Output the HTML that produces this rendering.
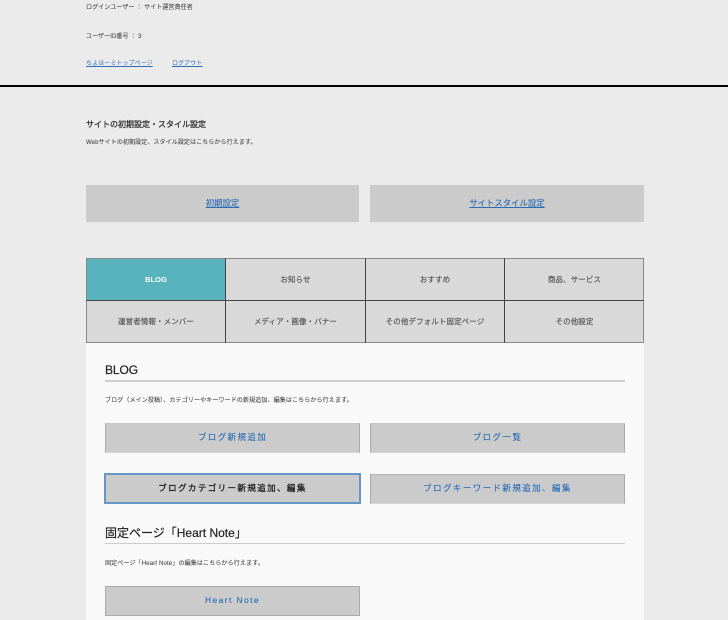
<!DOCTYPE html>
<html lang="ja"><head><meta charset="utf-8">
<style>
html,body{margin:0;padding:0}
body{width:728px;height:620px;overflow:hidden;background:#ecebec;position:relative;font-family:"Liberation Sans","Noto Sans CJK JP",sans-serif;color:#444}
.a{position:absolute;white-space:nowrap}
.t{font-size:6px;line-height:10px;letter-spacing:.08px;color:#444;-webkit-text-stroke:.1px #555}
a{color:#2a6db5;text-decoration:underline}
.big{position:absolute;top:185px;height:37px;line-height:36px;background:#cbcbcb;text-align:center;font-size:8.4px;-webkit-text-stroke:.1px #2a6db5}
.tab{position:absolute;box-sizing:border-box;height:42px;line-height:43px;background:#d9d9d9;text-align:center;font-size:7.5px;color:#555;letter-spacing:.1px;-webkit-text-stroke:.15px #555}
.v,.h{position:absolute;background:#444}
.o{position:absolute;background:#888}
.btn{position:absolute;box-sizing:border-box;height:30px;line-height:27px;background:#cbcbcb;border:1px solid #c6c6c6;border-left-color:#aaa;border-right-color:#aaa;border-bottom-color:#d6d6d6;text-align:center;font-size:8.5px;letter-spacing:1.4px;color:#2a6db5;-webkit-text-stroke:.12px #2a6db5}
h2{position:absolute;margin:0;font-weight:normal;color:#222;font-size:12px;line-height:16px;white-space:nowrap;-webkit-text-stroke:.2px #222}
.ln{position:absolute;left:105px;width:520px;height:1px;background:#ccc}
</style></head><body>
<div class="a t" style="left:86px;top:3px">ログインユーザー ： サイト運営責任者</div>
<div class="a t" style="left:86px;top:31.5px">ユーザーID番号 ： 3</div>
<div class="a t" style="left:86px;top:58.5px"><a style="-webkit-text-stroke:0">ちよほーミトップページ</a></div>
<div class="a t" style="left:172px;top:58.5px"><a style="-webkit-text-stroke:0">ログアウト</a></div>
<div class="a" style="left:0;top:85px;width:728px;height:2px;background:#000"></div>
<div class="a" style="left:86px;top:118.5px;font-size:8px;line-height:12px;color:#333;-webkit-text-stroke:.3px #333">サイトの初期設定・スタイル設定</div>
<div class="a t" style="left:86px;top:137.5px;letter-spacing:.1px">Webサイトの初期設定、スタイル設定はこちらから行えます。</div>
<div class="big" style="left:86px;width:273px"><a>初期設定</a></div>
<div class="big" style="left:370px;width:274px"><a>サイトスタイル設定</a></div>

<div class="tab" style="left:86px;top:258px;width:140px;background:#59b3bd;color:#fff;font-weight:bold;-webkit-text-stroke:0">BLOG</div>
<div class="tab" style="left:226px;top:258px;width:139px">お知らせ</div>
<div class="tab" style="left:365px;top:258px;width:140px">おすすめ</div>
<div class="tab" style="left:505px;top:258px;width:139px">商品、サービス</div>
<div class="tab" style="left:86px;top:300px;width:140px;height:43px;line-height:44px">運営者情報・メンバー</div>
<div class="tab" style="left:226px;top:300px;width:139px;height:43px;line-height:44px">メディア・画像・バナー</div>
<div class="tab" style="left:365px;top:300px;width:140px;height:43px;line-height:44px">その他デフォルト固定ページ</div>
<div class="tab" style="left:505px;top:300px;width:139px;height:43px;line-height:44px">その他設定</div>
<div class="o" style="left:86px;top:258px;width:558px;height:1px"></div>
<div class="o" style="left:86px;top:342px;width:558px;height:1px"></div>
<div class="o" style="left:86px;top:258px;width:1px;height:85px"></div>
<div class="o" style="left:643px;top:258px;width:1px;height:85px"></div>
<div class="h" style="left:86px;top:300px;width:558px;height:1px"></div>
<div class="v" style="left:225px;top:258px;width:1px;height:85px"></div>
<div class="v" style="left:365px;top:258px;width:1px;height:85px"></div>
<div class="v" style="left:504px;top:258px;width:1px;height:85px"></div>

<div class="a" style="left:86px;top:343px;width:558px;height:277px;background:#f9f9f9"></div>
<h2 style="left:105px;top:362px;letter-spacing:-.1px">BLOG</h2>
<div class="ln" style="top:380px;height:1.5px"></div>
<div class="a t" style="left:105px;top:395.5px;letter-spacing:.13px">ブログ（メイン投稿）、カテゴリーやキーワードの新規追加、編集はこちらから行えます。</div>
<div class="btn" style="left:105px;top:423px;width:255px"><a style="text-decoration:none">ブログ新規追加</a></div>
<div class="btn" style="left:370px;top:423px;width:255px"><a style="text-decoration:none">ブログ一覧</a></div>
<div class="btn" style="left:104px;top:473px;width:257px;height:31px;border:2px solid #6497c6;color:#222;line-height:27px;-webkit-text-stroke:.3px #222">ブログカテゴリー新規追加、編集</div>
<div class="btn" style="left:370px;top:474px;width:255px;border-top-color:#b4b4b4"><a style="text-decoration:none">ブログキーワード新規追加、編集</a></div>
<h2 style="left:105px;top:525px">固定ページ「Heart Note」</h2>
<div class="ln" style="top:543px"></div>
<div class="a t" style="left:105px;top:558.5px;letter-spacing:.15px">固定ページ「Heart Note」の編集はこちらから行えます。</div>
<div class="btn" style="left:105px;top:586px;width:255px;border-color:#aaa"><a style="text-decoration:none">Heart Note</a></div>
</body></html>
